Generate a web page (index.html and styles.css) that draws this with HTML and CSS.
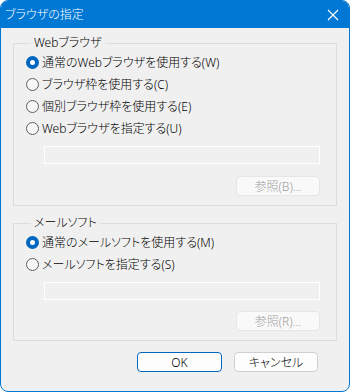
FILE: index.html
```html
<!DOCTYPE html>
<html lang="ja">
<head>
    <meta charset="UTF-8">
    <title>ブラウザの指定</title>
    <link rel="stylesheet" href="styles.css">
</head>
<body>
    <div class="dialog">
        <div class="titleBar">
            <span class="titleText">ブラウザの指定</span>
            <svg class="closeBtn" width="12" height="12" viewBox="0 0 12 12">
                <path d="M1 1 L11 11 M11 1 L1 11" stroke="#fff" stroke-width="1.1" fill="none"/>
            </svg>
        </div>

        <div class="content">
            <fieldset class="group">
                <legend>Webブラウザ</legend>
                <label class="radioRow"><input type="radio" name="browser" checked>通常のWebブラウザを使用する(W)</label>
                <label class="radioRow"><input type="radio" name="browser">ブラウザ枠を使用する(C)</label>
                <label class="radioRow"><input type="radio" name="browser">個別ブラウザ枠を使用する(E)</label>
                <label class="radioRow"><input type="radio" name="browser">Webブラウザを指定する(U)</label>
                <input class="pathBox" type="text" disabled>
                <div class="browseLine">
                    <button class="btn" disabled>参照(B)...</button>
                </div>
            </fieldset>

            <fieldset class="group group2">
                <legend>メールソフト</legend>
                <label class="radioRow"><input type="radio" name="mail" checked>通常のメールソフトを使用する(M)</label>
                <label class="radioRow"><input type="radio" name="mail">メールソフトを指定する(S)</label>
                <input class="pathBox" type="text" disabled>
                <div class="browseLine">
                    <button class="btn" disabled>参照(R)...</button>
                </div>
            </fieldset>

            <div class="footer">
                <button class="btn default">OK</button>
                <button class="btn">キャンセル</button>
            </div>
        </div>
    </div>
</body>
</html>
```

FILE: styles.css
```css
* {
    box-sizing: border-box;
    margin: 0;
    padding: 0;
}
body {
    background: #fff;
    font-family: "Noto Sans", "Noto Sans CJK JP", sans-serif;
    font-size: 12px;
    font-weight: 300;
    font-feature-settings: "palt";
    color: #000;
}
.dialog {
    width: 350px;
    height: 392px;
    border: 1px solid #0078d4;
    border-radius: 8px;
    background: #f0f0f0;
    overflow: hidden;
}
.titleBar {
    height: 27px;
    background: #0078d4;
    color: #fff;
    display: flex;
    align-items: center;
    justify-content: space-between;
    padding: 0 10px 0 4px;
}
.titleText {
    line-height: 16px;
    padding-top: 1px;
}
.closeBtn {
    display: block;
}
.content {
    padding: 7px 12px 0 12px;
}
.group {
    border: 1px solid #dcdcdc;
    padding: 0 16px 9px 12px;
}
.group legend {
    line-height: 16px;
    margin-left: 5px;
    padding: 0 3px;
}
.group2 {
    margin-top: 9px;
}
.radioRow {
    display: flex;
    align-items: center;
    height: 22px;
}
.radioRow input {
    appearance: none;
    width: 13px;
    height: 13px;
    border: 1px solid #5f5f5f;
    border-radius: 50%;
    background: #f7f7f7;
    margin-right: 3px;
}
.radioRow input:checked {
    border: 4px solid #0067c0;
    background: #fff;
}
.pathBox {
    display: block;
    width: 276px;
    height: 18px;
    margin: 7px 0 0 18px;
    border: 1px solid #fff;
    background: #f0f0f0;
}
.browseLine {
    display: flex;
    justify-content: flex-end;
    margin-top: 12px;
}
.group2 .browseLine {
    margin-top: 11px;
}
.btn {
    width: 84px;
    height: 20px;
    font: inherit;
    color: #000;
    background: #fdfdfd;
    border: 1px solid #d0d0d0;
    border-radius: 4px;
}
.btn:disabled {
    color: #9d9d9d;
    background: #f9f9f9;
    border-color: #e6e6e6;
}
.btn.default {
    width: 85px;
    border-color: #0067c0;
}
.footer {
    display: flex;
    justify-content: flex-end;
    gap: 12px;
    margin-top: 11px;
    padding-right: 19px;
}
```
